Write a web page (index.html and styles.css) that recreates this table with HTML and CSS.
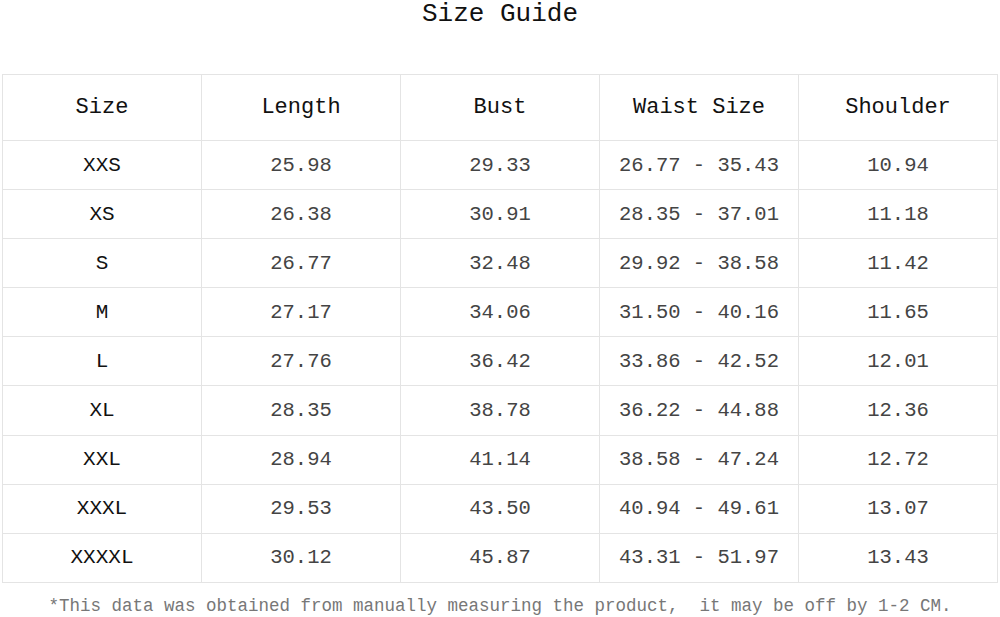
FILE: index.html
```html
<!DOCTYPE html>
<html>
<head>
<meta charset="utf-8">
<link rel="stylesheet" href="styles.css">
</head>
<body>
<div class="page">
  <h1 class="title">Size Guide</h1>
  <table class="guide">
    <thead>
      <tr><th>Size</th><th>Length</th><th>Bust</th><th>Waist Size</th><th>Shoulder</th></tr>
    </thead>
    <tbody>
      <tr><td class="sz">XXS</td><td>25.98</td><td>29.33</td><td>26.77 - 35.43</td><td>10.94</td></tr>
      <tr><td class="sz">XS</td><td>26.38</td><td>30.91</td><td>28.35 - 37.01</td><td>11.18</td></tr>
      <tr><td class="sz">S</td><td>26.77</td><td>32.48</td><td>29.92 - 38.58</td><td>11.42</td></tr>
      <tr><td class="sz">M</td><td>27.17</td><td>34.06</td><td>31.50 - 40.16</td><td>11.65</td></tr>
      <tr><td class="sz">L</td><td>27.76</td><td>36.42</td><td>33.86 - 42.52</td><td>12.01</td></tr>
      <tr><td class="sz">XL</td><td>28.35</td><td>38.78</td><td>36.22 - 44.88</td><td>12.36</td></tr>
      <tr><td class="sz">XXL</td><td>28.94</td><td>41.14</td><td>38.58 - 47.24</td><td>12.72</td></tr>
      <tr><td class="sz">XXXL</td><td>29.53</td><td>43.50</td><td>40.94 - 49.61</td><td>13.07</td></tr>
      <tr><td class="sz">XXXXL</td><td>30.12</td><td>45.87</td><td>43.31 - 51.97</td><td>13.43</td></tr>
    </tbody>
  </table>
  <p class="note">*This data was obtained from manually measuring the product,&nbsp; it may be off by 1-2 CM.</p>
</div>
</body>
</html>
```

FILE: styles.css
```css
html, body {
  margin: 0;
  padding: 0;
  background: #ffffff;
}
body {
  font-family: "Liberation Mono", "DejaVu Sans Mono", monospace;
  color: #111;
}
.page {
  width: 1000px;
  height: 617px;
  overflow: hidden;
}
.title {
  margin: 0;
  height: 74px;
  text-align: center;
  font-size: 26px;
  font-weight: normal;
  line-height: 28px;
  color: #111;
}
.guide {
  margin-left: 2px;
  width: 996px;
  border-collapse: collapse;
  table-layout: fixed;
}
.guide th, .guide td {
  border: 1px solid #e4e4e4;
  text-align: center;
  padding: 0;
  font-weight: normal;
}
.guide th {
  height: 65px;
  font-size: 22px;
  color: #111;
}
.guide td {
  height: 48.1px;
  font-size: 20.5px;
  color: #444;
}
.guide td.sz {
  color: #111;
  font-size: 21px;
}
.note {
  margin: 12px 0 0 0;
  text-align: center;
  font-size: 17.5px;
  line-height: 22px;
  color: #777;
  white-space: nowrap;
}
```
